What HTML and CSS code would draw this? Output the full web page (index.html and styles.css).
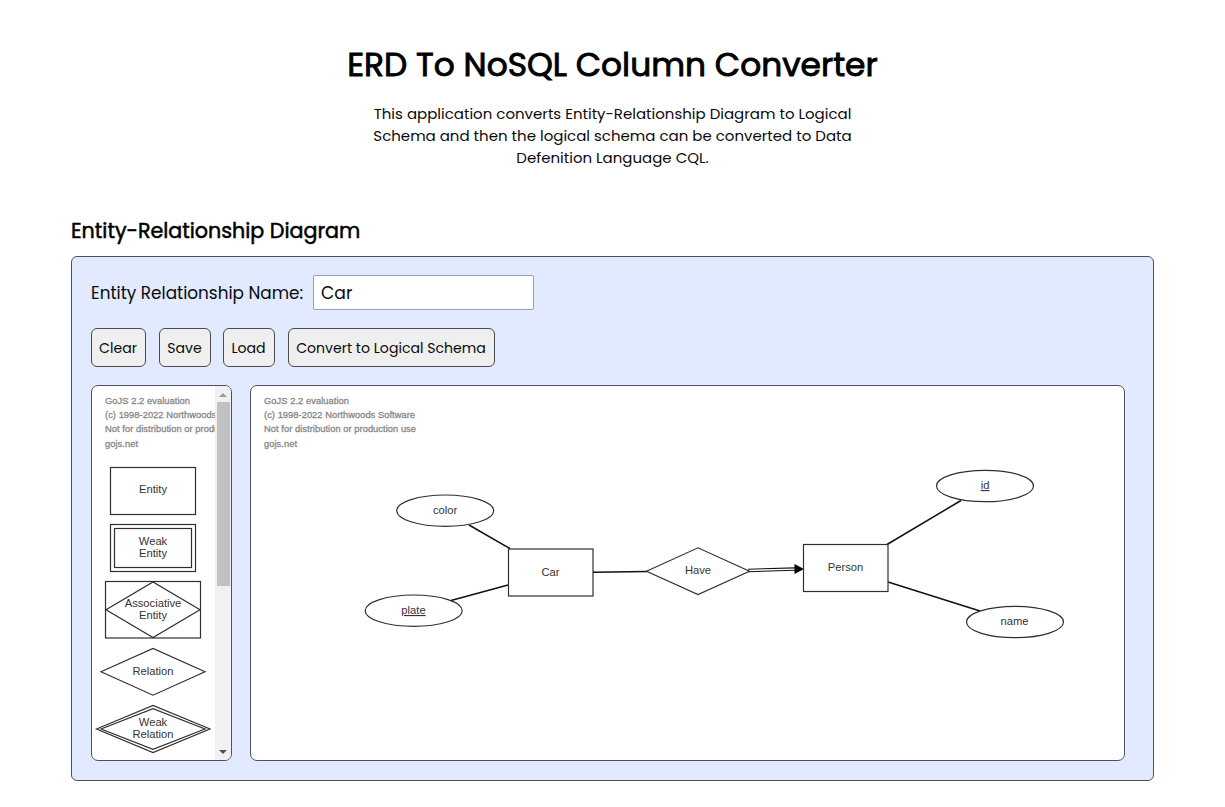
FILE: index.html
```html
<!DOCTYPE html>
<html lang="en">
<head>
<meta charset="utf-8">
<title>ERD To NoSQL Column Converter</title>
<link rel="stylesheet" href="styles.css">
</head>
<body>
<main class="page">
  <header class="intro">
    <h1 class="title">ERD To NoSQL Column Converter</h1>
    <p class="lead">This application converts Entity-Relationship Diagram to Logical<br>Schema and then the logical schema can be converted to Data<br>Defenition Language CQL.</p>
  </header>
  <h2 class="section-title">Entity-Relationship Diagram</h2>
  <section class="panel">
    <div class="name-row">
      <label class="name-label" for="erd-name">Entity Relationship Name:</label>
      <input class="name-input" id="erd-name" type="text" value="Car">
    </div>
    <div class="actions">
      <button class="btn clear">Clear</button>
      <button class="btn save">Save</button>
      <button class="btn load">Load</button>
      <button class="btn convert">Convert to Logical Schema</button>
    </div>
    <div class="workspace">
      <div class="palette">
        <svg class="palette-canvas" width="123" height="374" viewBox="92 386 123 374">
          <g class="watermark">
            <text x="105" y="404.400" textLength="85">GoJS 2.2 evaluation</text>
            <text x="105" y="418.400" textLength="151">(c) 1998-2022 Northwoods Software</text>
            <text x="105" y="432.400" textLength="152">Not for distribution or production use</text>
            <text x="105" y="446.500" textLength="33">gojs.net</text>
          </g>
          <g class="shape">
            <rect x="110.500" y="467.500" width="85" height="47"/>
            <rect x="110.500" y="524.500" width="85" height="47"/>
            <rect x="114.500" y="528.500" width="77" height="39"/>
            <rect x="105.500" y="581.500" width="95" height="56.500"/>
            <path d="M106 609.700 153 582 200 609.700 153 637.500Z"/>
            <path d="M101 671.700 153 648.500 205 671.700 153 695.200Z"/>
            <path d="M96.500 729 153 705.500 210 729 153 752.500Z"/>
            <path d="M101 729 153 708.700 205 729 153 749.300Z"/>
          </g>
          <g class="label">
            <text x="153" y="493.400">Entity</text>
            <text x="153" y="545">Weak</text>
            <text x="153" y="557">Entity</text>
            <text x="153" y="607">Associative</text>
            <text x="153" y="619">Entity</text>
            <text x="153" y="675">Relation</text>
            <text x="153" y="726">Weak</text>
            <text x="153" y="738">Relation</text>
          </g>
        </svg>
        <div class="scrollbar">
          <svg class="arrow up" width="8" height="4" viewBox="0 0 8 4"><path d="M0 4 4 0 8 4Z"/></svg>
          <div class="thumb"></div>
          <svg class="arrow down" width="8" height="4" viewBox="0 0 8 4"><path d="M0 0 4 4 8 0Z"/></svg>
        </div>
      </div>
      <div class="diagram">
        <svg class="diagram-canvas" width="873" height="374" viewBox="251 386 873 374">
          <g class="watermark">
            <text x="264" y="404.400" textLength="85">GoJS 2.2 evaluation</text>
            <text x="264" y="418.400" textLength="151">(c) 1998-2022 Northwoods Software</text>
            <text x="264" y="432.400" textLength="152">Not for distribution or production use</text>
            <text x="264" y="446.500" textLength="33">gojs.net</text>
          </g>
          <g class="link">
            <path d="M469 525 510 548.500M451 600.500 508 585M593 572.300 647 571.500M887 544.500 961 500.500M888 582 980 611"/>
            <path class="double" d="M748 569.200 795 567.900M748 571.700 795 570.300"/>
            <path class="arrowhead" d="M794.500 564 804 569 794.500 574Z"/>
          </g>
          <g class="shape">
            <rect x="508.500" y="549" width="84.500" height="47"/>
            <rect x="803.500" y="544.500" width="84.500" height="47"/>
            <path d="M646.500 571.300 698 547.800 749.500 571.300 698 594.500Z"/>
            <ellipse cx="445.200" cy="510.700" rx="48.500" ry="15.700"/>
            <ellipse cx="413.700" cy="610.700" rx="48.500" ry="15.700"/>
            <ellipse cx="985" cy="486" rx="48.500" ry="15.700"/>
            <ellipse cx="1015" cy="622" rx="48.500" ry="15.700"/>
          </g>
          <g class="label">
            <text x="445" y="514">color</text>
            <text x="413.500" y="614" class="key">plate</text>
            <text x="550.500" y="576">Car</text>
            <text x="698" y="574.400">Have</text>
            <text x="845.500" y="571">Person</text>
            <text x="985" y="489" class="key">id</text>
            <text x="1014.500" y="625">name</text>
          </g>
        </svg>
      </div>
    </div>
  </section>
</main>
</body>
</html>
```
FILE: styles.css
```css
* { box-sizing: border-box; }
body {
  margin: 0;
  background: #fff;
  color: #0a0a0a;
  font-family: Poppins, Inter, sans-serif;
  overflow: hidden;
}
.page { width: 1083px; margin-left: 71px; padding-top: 40px; }
.intro { text-align: center; white-space: nowrap; }
.title { margin: 0; font-size: 32.850px; line-height: 49px; font-weight: 400; color: #000; -webkit-text-stroke: .9px #000; }
.lead { margin: 14px 0 0; font-size: 15px; line-height: 22px; }
.section-title { margin: 46px 0 0; font-size: 20.650px; line-height: 32px; font-weight: 400; color: #000; -webkit-text-stroke: .5px #000; white-space: nowrap; }
.panel {
  height: 525px;
  margin-top: 9px;
  padding: 18px 19px;
  background: #e1eafe;
  border: 1px solid #4c5160;
  border-radius: 6px;
}
.name-row { display: flex; align-items: center; height: 35px; font-size: 16.850px; }
.name-label { width: 222px; white-space: nowrap; }
.name-input {
  width: 221px;
  height: 35px;
  padding: 0 7px;
  border: 1px solid #9aa0ab;
  border-radius: 2px;
  background: #fff;
  color: #0a0a0a;
  font: inherit;
  font-size: 17.200px;
}
.actions { display: flex; margin-top: 18px; }
.btn {
  height: 39px;
  padding: 1px 1px 0 0;
  background: #efefef;
  border: 1px solid #4c4c50;
  border-radius: 6px;
  color: #0a0a0a;
  font: inherit;
  font-size: 14.100px;
  white-space: nowrap;
}
.clear { width: 55px; margin-right: 13px; }
.save { width: 52px; margin-right: 12px; }
.load { width: 52px; margin-right: 13px; }
.convert { width: 207px; }
.workspace { display: flex; gap: 18px; margin-top: 18px; }
.palette, .diagram {
  display: flex;
  height: 376px;
  background: #fff;
  border: 1px solid #4c5160;
  border-radius: 7px;
  overflow: hidden;
}
.palette { width: 141px; }
.diagram { width: 875px; }
.palette-canvas, .diagram-canvas { display: block; flex: none; }
.scrollbar {
  display: flex;
  flex-direction: column;
  align-items: center;
  width: 16px;
  padding: 7px 1px 6px;
  background: #f1f1f1;
}
.thumb { width: 13px; height: 184px; margin-top: 5px; background: #c1c1c1; }
.arrow { display: block; flex: none; }
.up { fill: #9a9a9a; }
.down { margin-top: auto; fill: #505050; }
.watermark { font: 9.300px "Liberation Sans", Arial, sans-serif; fill: #888; stroke: #888; stroke-width: .3; }
.shape { fill: none; stroke: #303030; stroke-width: 1.200; }
.label { font: 11.200px "Liberation Sans", Arial, sans-serif; fill: #333; text-anchor: middle; }
.key { text-decoration: underline; }
.link { fill: none; stroke: #111; stroke-width: 1.500; }
.double { stroke-width: 1.100; }
.arrowhead { fill: #000; stroke: none; }
```
